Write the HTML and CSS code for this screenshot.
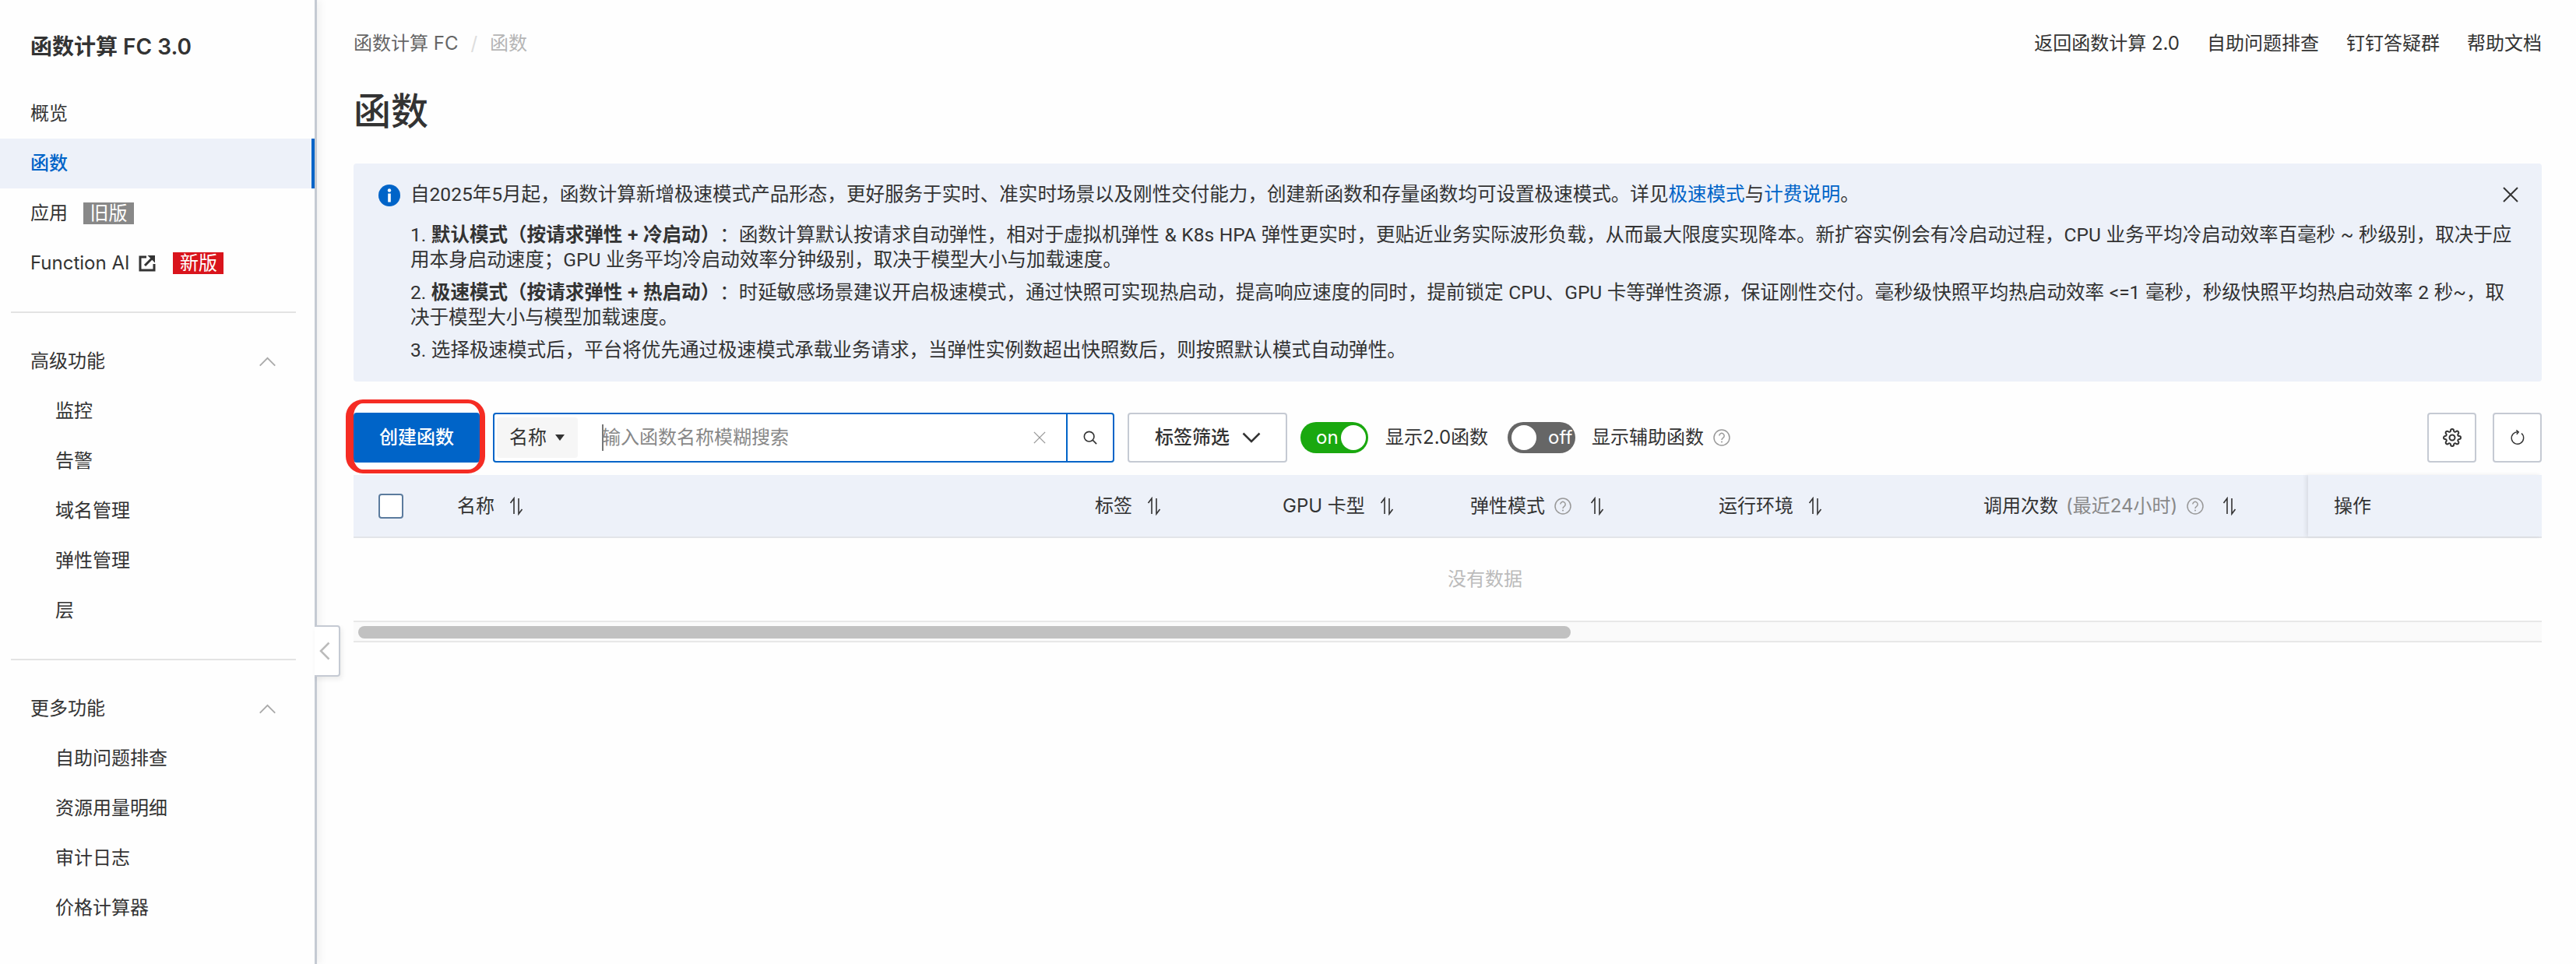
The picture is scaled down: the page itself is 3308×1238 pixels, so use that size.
FILE: index.html
```html
<!DOCTYPE html>
<html lang="zh-CN">
<head>
<meta charset="utf-8">
<title>函数计算 FC 3.0</title>
<link rel="stylesheet" href="styles.css">
</head>
<body>
<svg class="defs" aria-hidden="true">
  <defs>
    <symbol id="sort" viewBox="0 0 18 24"><path d="M6 22V2L1.5 8M12 2V22L16.5 16" fill="none" stroke="currentColor" stroke-width="1.6"/></symbol>
    <symbol id="help" viewBox="0 0 22 22"><circle cx="11" cy="11" r="10" fill="none" stroke="currentColor" stroke-width="1.5"/><path d="M7.8 8.6a3.2 3.2 0 1 1 4.9 2.7c-1.1.7-1.7 1.2-1.7 2.6" fill="none" stroke="currentColor" stroke-width="1.5"/><circle cx="11" cy="16.6" r="1" fill="currentColor"/></symbol>
    <symbol id="up" viewBox="0 0 24 14"><path d="M1.5 12.5 12 2l10.500 10.500" fill="none" stroke="currentColor" stroke-width="2"/></symbol>
  </defs>
</svg>
<aside class="sidebar">
  <div class="brand">函数计算 FC 3.0</div>
  <nav>
    <div class="nav-item">概览</div>
    <div class="nav-item active">函数</div>
    <div class="nav-item">应用<span class="tag tag-old">旧版</span></div>
    <div class="nav-item">Function AI
      <svg class="ext" viewBox="0 0 22 22"><path d="M10 3H2v17h18v-8" fill="none" stroke="currentColor" stroke-width="3"/><path d="M8 14 17 5" fill="none" stroke="currentColor" stroke-width="3"/><path d="M11.500 1H21v9.500z" fill="currentColor"/></svg>
      <span class="tag tag-new">新版</span></div>
  </nav>
  <div class="divider"></div>
  <div class="nav-item group">高级功能<svg class="caret"><use href="#up"/></svg></div>
  <div class="nav-item sub">监控</div>
  <div class="nav-item sub">告警</div>
  <div class="nav-item sub">域名管理</div>
  <div class="nav-item sub">弹性管理</div>
  <div class="nav-item sub">层</div>
  <div class="divider"></div>
  <div class="nav-item group">更多功能<svg class="caret"><use href="#up"/></svg></div>
  <div class="nav-item sub">自助问题排查</div>
  <div class="nav-item sub">资源用量明细</div>
  <div class="nav-item sub">审计日志</div>
  <div class="nav-item sub">价格计算器</div>
  <div class="collapse"><svg viewBox="0 0 14 24"><path d="M12.500 1.500 2 12l10.500 10.500" fill="none" stroke="currentColor" stroke-width="2.500"/></svg></div>
</aside>
<main class="main">
  <header class="topbar">
    <div class="crumbs"><span>函数计算 FC</span><i>/</i><span class="crumb-now">函数</span></div>
    <div class="links"><span>返回函数计算 2.0</span><span>自助问题排查</span><span>钉钉答疑群</span><span>帮助文档</span></div>
  </header>
  <h1>函数</h1>
  <section class="alert">
    <svg class="info" viewBox="0 0 28 28"><circle cx="14" cy="14" r="14" fill="#0064c8"/><circle cx="14" cy="7.500" r="2.200" fill="#fff"/><rect x="12.200" y="11.500" width="3.600" height="11" fill="#fff"/></svg>
    <div class="alert-body">
      <p class="lead">自2025年5月起，函数计算新增极速模式产品形态，更好服务于实时、准实时场景以及刚性交付能力，创建新函数和存量函数均可设置极速模式。详见<a>极速模式</a>与<a>计费说明</a>。</p>
      <p>1. <b>默认模式（按请求弹性 + 冷启动）</b>：函数计算默认按请求自动弹性，相对于虚拟机弹性 &amp; K8s HPA 弹性更实时，更贴近业务实际波形负载，从而最大限度实现降本。新扩容实例会有冷启动过程，CPU 业务平均冷启动效率百毫秒 ~ 秒级别，取决于应<br>用本身启动速度；GPU 业务平均冷启动效率分钟级别，取决于模型大小与加载速度。</p>
      <p>2. <b>极速模式（按请求弹性 + 热启动）</b>：时延敏感场景建议开启极速模式，通过快照可实现热启动，提高响应速度的同时，提前锁定 CPU、GPU 卡等弹性资源，保证刚性交付。毫秒级快照平均热启动效率 &lt;=1 毫秒，秒级快照平均热启动效率 2 秒~，取<br>决于模型大小与模型加载速度。</p>
      <p>3. 选择极速模式后，平台将优先通过极速模式承载业务请求，当弹性实例数超出快照数后，则按照默认模式自动弹性。</p>
    </div>
    <svg class="close" viewBox="0 0 20 20"><path d="M1 1 19 19M19 1 1 19" fill="none" stroke="currentColor" stroke-width="2"/></svg>
  </section>
  <div class="toolbar">
    <button class="btn-primary">创建函数</button>
    <div class="search">
      <div class="search-select">名称<span class="tri"></span></div>
      <div class="search-input"><span class="caret-line"></span>输入函数名称模糊搜索</div>
      <svg class="clear" viewBox="0 0 18 18"><path d="M1 1 17 17M17 1 1 17" fill="none" stroke="currentColor" stroke-width="1.500"/></svg>
      <div class="search-btn"><svg viewBox="0 0 20 20"><circle cx="8.500" cy="8.500" r="7" fill="none" stroke="currentColor" stroke-width="1.800"/><path d="M13.500 13.500 19 19" fill="none" stroke="currentColor" stroke-width="1.800"/></svg></div>
    </div>
    <button class="btn-tag">标签筛选<svg viewBox="0 0 24 14"><path d="M1.500 1.500 12 12 22.500 1.500" fill="none" stroke="currentColor" stroke-width="2.500"/></svg></button>
    <div class="switch on"><span>on</span><i></i></div>
    <span class="sw-label">显示2.0函数</span>
    <div class="switch off"><i></i><span>off</span></div>
    <span class="sw-label second">显示辅助函数</span>
    <svg class="help tool-help"><use href="#help"/></svg>
    <div class="tools">
      <button class="btn-icon"><svg viewBox="0 0 24 24" fill="none" stroke="currentColor" stroke-width="2"><circle cx="12" cy="12" r="3.500"/><path d="M19.400 15a1.650 1.650 0 0 0 .33 1.820l.06.06a2 2 0 0 1 0 2.830 2 2 0 0 1-2.830 0l-.06-.06a1.650 1.650 0 0 0-1.820-.33 1.650 1.650 0 0 0-1 1.510V21a2 2 0 0 1-2 2 2 2 0 0 1-2-2v-.09A1.650 1.650 0 0 0 9 19.400a1.650 1.650 0 0 0-1.820.33l-.06.06a2 2 0 0 1-2.830 0 2 2 0 0 1 0-2.830l.06-.06a1.650 1.650 0 0 0 .33-1.820 1.650 1.650 0 0 0-1.510-1H3a2 2 0 0 1-2-2 2 2 0 0 1 2-2h.09A1.650 1.650 0 0 0 4.600 9a1.650 1.650 0 0 0-.33-1.820l-.06-.06a2 2 0 0 1 0-2.830 2 2 0 0 1 2.830 0l.06.06a1.650 1.650 0 0 0 1.820.33H9a1.650 1.650 0 0 0 1-1.510V3a2 2 0 0 1 2-2 2 2 0 0 1 2 2v.09a1.650 1.650 0 0 0 1 1.510 1.650 1.650 0 0 0 1.820-.33l.06-.06a2 2 0 0 1 2.830 0 2 2 0 0 1 0 2.830l-.06.06a1.650 1.650 0 0 0-.33 1.820V9a1.650 1.650 0 0 0 1.510 1H21a2 2 0 0 1 2 2 2 2 0 0 1-2 2h-.09a1.650 1.650 0 0 0-1.510 1z"/></svg></button>
      <button class="btn-icon"><svg class="refresh" viewBox="0 0 24 24" fill="none" stroke="currentColor" stroke-width="1.700"><path d="M13 3.300a9.300 9.300 0 1 0 5 2.200"/><path d="M10 .5 13.500 3.300 10.500 6.800"/></svg></button>
    </div>
  </div>
  <div class="table">
    <div class="thead">
      <div class="th th-check"><span class="checkbox"></span></div>
      <div class="th">名称<svg class="sort"><use href="#sort"/></svg></div>
      <div class="th">标签<svg class="sort"><use href="#sort"/></svg></div>
      <div class="th">GPU 卡型<svg class="sort"><use href="#sort"/></svg></div>
      <div class="th">弹性模式<svg class="help"><use href="#help"/></svg><svg class="sort"><use href="#sort"/></svg></div>
      <div class="th">运行环境<svg class="sort"><use href="#sort"/></svg></div>
      <div class="th">调用次数<span class="muted">(最近24小时)</span><svg class="help"><use href="#help"/></svg><svg class="sort"><use href="#sort"/></svg></div>
      <div class="th th-op">操作</div>
    </div>
    <div class="empty">没有数据</div>
    <div class="scrollbar"><div class="thumb"></div></div>
  </div>
</main>
</body>
</html>
```

FILE: styles.css
```css
* { box-sizing: border-box; }
html, body { margin: 0; height: 100%; }
body {
  display: flex;
  height: 100vh;
  overflow: hidden;
  background: #fefefe;
  color: #333;
  font: 400 24px/32px Inter, "Noto Sans CJK SC", sans-serif;
  text-spacing-trim: space-all;
}
p { margin: 0; }
button { font: inherit; color: inherit; background: #fff; cursor: pointer; }
.defs { position: absolute; width: 0; height: 0; }

/* sidebar */
.sidebar {
  position: relative;
  flex: 0 0 407px;
  border-right: 3px solid #c5cad3;
  background: #fefefe;
  box-shadow: 4px 0 10px rgba(0, 0, 0, .06);
}
.brand {
  height: 114px;
  padding: 44px 0 0 39px;
  font-size: 28px;
  font-weight: 600;
  line-height: 32px;
}
.nav-item {
  display: flex;
  align-items: center;
  height: 64px;
  padding-left: 39px;
  white-space: nowrap;
}
.nav-item.active {
  background: #edf1f9;
  color: #0064c8;
  font-weight: 500;
  border-right: 4px solid #0064c8;
}
.nav-item.sub { padding-left: 71px; }
.nav-item.group { justify-content: space-between; padding-right: 49px; }
.tag {
  height: 28px;
  padding: 0 8.500px;
  color: #fff;
  font-size: 24px;
  line-height: 28px;
}
.tag-old { margin-left: 20px; background: #888; }
.tag-new { margin-left: 22px; background: #d9141c; }
.ext { width: 22px; height: 22px; margin-left: 12px; }
.caret { width: 23px; height: 13px; color: #aaa; }
.divider { height: 2px; margin: 30px 24px 30px 14px; background: #e3e3e3; }
.collapse {
  position: absolute;
  top: 803px;
  left: 404px;
  display: flex;
  align-items: center;
  padding-left: 6px;
  width: 33px;
  height: 66px;
  background: #fff;
  border: 2px solid #c5cad3;
  border-left: 0;
  border-radius: 0 4px 4px 0;
  color: #bbb;
  box-shadow: 2px 3px 6px rgba(0, 0, 0, .08);
}
.collapse svg { width: 14px; height: 24px; }

/* main */
.main { flex: 1; min-width: 0; padding: 0 44px 0 47px; }
.topbar { display: flex; justify-content: space-between; align-items: center; height: 112px; }
.crumbs { display: flex; align-items: center; color: #666; }
.crumbs i { margin: 0 16px; color: #ddd; font-style: normal; }
.crumb-now { color: #b5b5b5; }
.links { display: flex; gap: 35px; }
h1 {
  margin: 0 0 36px;
  font-size: 48px;
  font-weight: 500;
  line-height: 62px;
}

/* alert */
.alert {
  display: flex;
  height: 280px;
  padding: 24px 32px;
  background: #edf1f9;
  border-radius: 4px;
}
.info { flex: none; width: 28px; height: 28px; margin-top: 3px; }
.alert-body {
  flex: 1;
  min-width: 0;
  margin-left: 13px;
  font-family: Roboto, "Noto Sans CJK SC", sans-serif;
  font-size: 24.550px;
  word-spacing: .5px;
  white-space: nowrap;
}
.alert-body p { margin-bottom: 10px; }
.alert-body .lead { margin-bottom: 20px; }
.alert-body b { font-weight: 600; }
.alert-body a { color: #0064c8; }
.close { flex: none; width: 20px; height: 20px; margin: 6px -2px 0 0; color: #333; }

/* toolbar */
.toolbar { display: flex; align-items: center; height: 64px; margin: 40px 0 16px; }
.btn-primary {
  position: relative;
  flex: none;
  width: 162px;
  height: 64px;
  padding: 0;
  border: 0;
  border-radius: 4px;
  background: #0064c8;
  color: #fff;
  font-weight: 500;
}
.btn-primary::after {
  content: "";
  position: absolute;
  inset: -17px -7px -14px -10px;
  border: solid #f52c24;
  border-width: 5px 7px 5px 10px;
  border-radius: 22px;
}
.search {
  display: flex;
  align-items: center;
  flex: none;
  width: 798px;
  height: 64px;
  margin-left: 17px;
  border: 2px solid #0064c8;
  border-radius: 4px;
  background: #fff;
}
.search-select {
  display: flex;
  align-items: center;
  flex: none;
  width: 104px;
  height: 52px;
  margin-left: 3px;
  padding-left: 16px;
  background: #f6f6f6;
  border-radius: 4px;
}
.tri {
  width: 0;
  height: 0;
  margin-left: 11px;
  border: 6.500px solid transparent;
  border-top: 8px solid #333;
  border-bottom: 0;
}
.search-input { display: flex; align-items: center; flex: 1; margin-left: 31px; color: #888; }
.caret-line { width: 2px; height: 34px; margin-right: -2px; background: #777; }
.clear { flex: none; width: 16px; height: 18px; margin-right: 26px; color: #999; }
.search-btn {
  display: flex;
  align-items: center;
  justify-content: center;
  flex: none;
  width: 60px;
  height: 60px;
  border-left: 2px solid #0064c8;
  color: #333;
}
.search-btn svg { width: 18px; height: 18px; }
.btn-tag {
  display: flex;
  align-items: center;
  flex: none;
  width: 205px;
  height: 64px;
  margin-left: 17px;
  padding: 0 0 0 33px;
  border: 2px solid #c5cad3;
  border-radius: 4px;
  font-weight: 500;
}
.btn-tag svg { width: 24px; height: 14px; margin-left: 16px; }
.switch {
  display: flex;
  align-items: center;
  flex: none;
  width: 87px;
  height: 40px;
  margin-left: 17px;
  border-radius: 20px;
  color: #fff;
}
.switch i { flex: none; width: 32px; height: 32px; border-radius: 50%; background: #fff; }
.switch.on { justify-content: space-between; padding: 0 3px 0 20px; background: #1aa80f; }
.switch.off { gap: 15px; margin-left: 25px; padding-left: 5px; background: #666; }
.sw-label { margin-left: 22px; white-space: nowrap; }
.sw-label.second { margin-left: 21px; }
.help { flex: none; width: 22px; height: 22px; margin: 0 5px 0 12px; color: #999; }
.tools { display: flex; gap: 21px; margin-left: auto; }
.btn-icon {
  display: flex;
  align-items: center;
  justify-content: center;
  width: 63px;
  height: 64px;
  padding: 0;
  border: 2px solid #c5cad3;
  border-radius: 4px;
}
.btn-icon svg { width: 24px; height: 24px; }
.btn-icon .refresh { width: 20px; height: 20px; }

/* table */
.thead {
  display: grid;
  grid-template-columns: 133px 819px 241px 241px 319px 340px 417px 1fr;
  height: 81px;
  background: #edf1f9;
  border-bottom: 2px solid #e3e5e9;
}
.th { display: flex; align-items: center; white-space: nowrap; }
.th-check { padding-left: 32px; }
.checkbox {
  width: 32px;
  height: 32px;
  background: #fff;
  border: 2px solid #5b7b9e;
  border-radius: 4px;
}
.sort { flex: none; width: 18px; height: 24px; margin-left: 19px; color: #333; }
.muted { margin-left: 10px; color: #888; }
.th-op { padding-left: 33px; box-shadow: -3px 0 5px rgba(0, 0, 0, .08); }
.empty {
  display: flex;
  align-items: center;
  justify-content: center;
  height: 106px;
  padding-left: 96px;
  color: #bbb;
}
.scrollbar {
  height: 28px;
  padding: 5px 6px;
  background: #fafafa;
  border-top: 2px solid #e8e8e8;
  border-bottom: 2px solid #e8e8e8;
}
.thumb { width: 1557px; height: 16px; border-radius: 8px; background: #c1c1c1; }
```
